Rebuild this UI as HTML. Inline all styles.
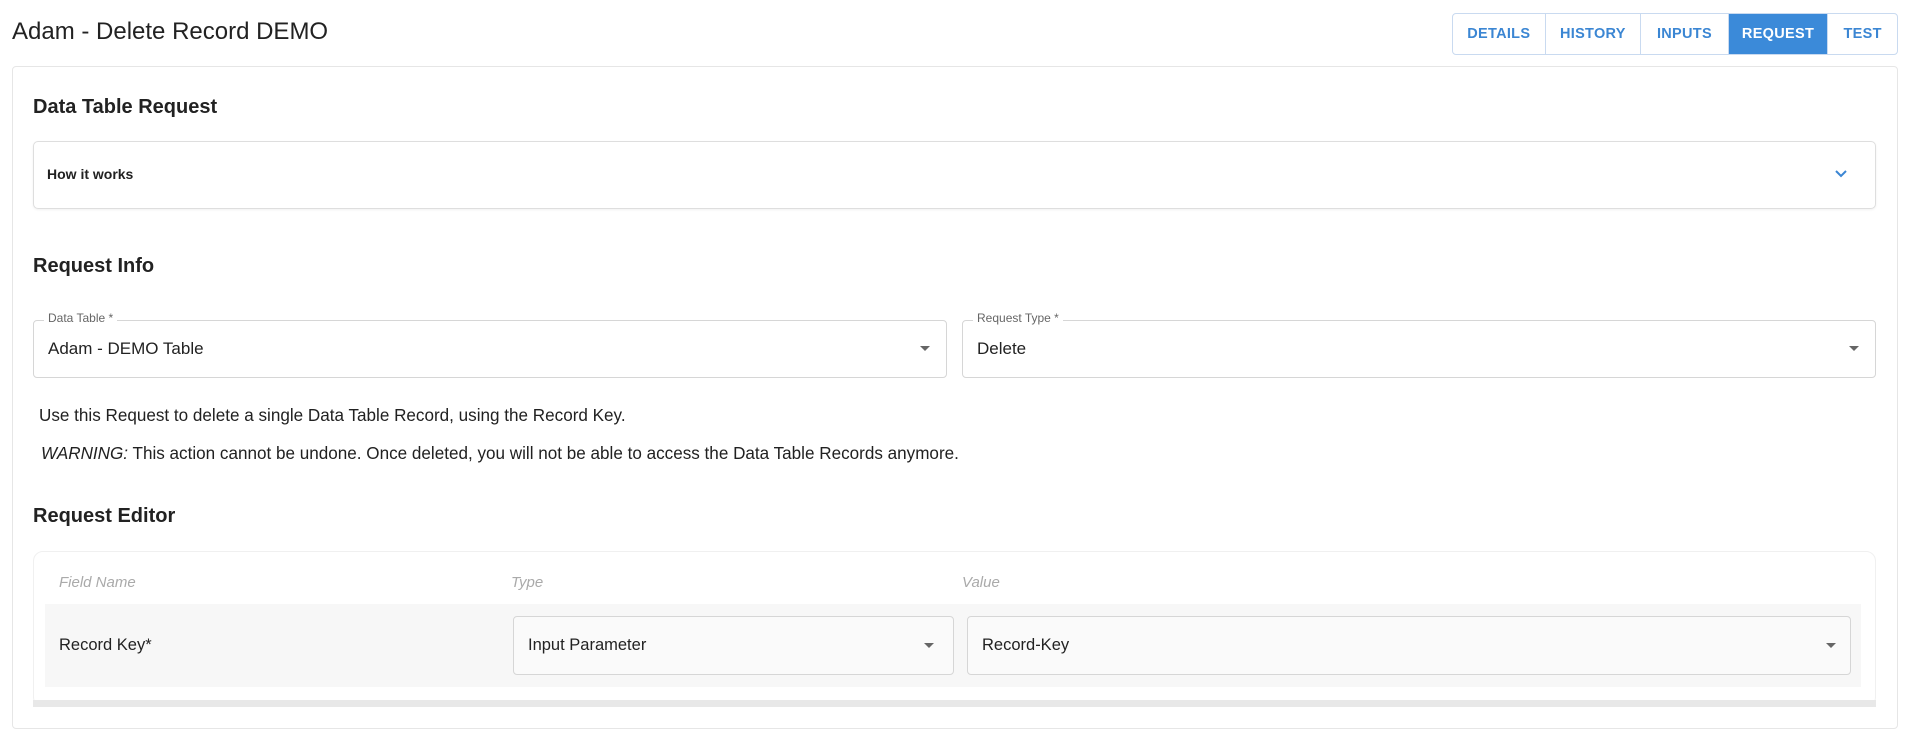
<!DOCTYPE html>
<html><head><meta charset="utf-8"><style>
*{box-sizing:border-box;margin:0;padding:0}
body{width:1920px;height:736px;background:#fff;font-family:"Liberation Sans",sans-serif;color:#212121;position:relative;overflow:hidden}
.a{position:absolute}
.title{left:12px;top:18px;font-size:24px;color:#222}
.tabs{left:1452px;top:13px;height:42px;width:446px;border:1px solid #c9daf0;border-radius:4px;display:flex;overflow:hidden}
.tab{height:100%;display:flex;align-items:center;justify-content:center;font-size:14.5px;font-weight:bold;color:#3b86d3;border-right:1px solid #c9daf0;letter-spacing:.3px}
.tab.on{background:#3b8ad9;color:#fff}
.card{left:12px;top:66px;width:1886px;height:663px;border:1px solid #e6e6e6;border-radius:4px}
.h{font-size:20px;font-weight:bold;color:#222}
.box{border:1px solid #dedede;border-radius:5px}
.sel{border:1px solid #d6d6d6;border-radius:4px}
.lab{font-size:12px;color:#666;background:#fff;padding:0 4px}
.val{font-size:17px;color:#222}
.arr{width:0;height:0;border-left:5px solid transparent;border-right:5px solid transparent;border-top:5px solid #666}
.th{font-size:15px;color:#aaa;font-style:italic}
</style></head><body>
<div class="a title">Adam - Delete Record DEMO</div>
<div class="a tabs">
<div class="tab" style="width:93px">DETAILS</div>
<div class="tab" style="width:96px">HISTORY</div>
<div class="tab" style="width:88px">INPUTS</div>
<div class="tab on" style="width:100px">REQUEST</div>
<div class="tab" style="width:69px;border-right:none">TEST</div>
</div>
<div class="a card"></div>
<div class="a h" style="left:33px;top:96px">Data Table Request</div>
<div class="a box" style="left:33px;top:141px;width:1843px;height:68px;box-shadow:0 1px 2px rgba(0,0,0,.06)"></div>
<div class="a" style="left:47px;top:166px;font-size:14px;font-weight:bold">How it works</div>
<svg class="a" style="left:1833px;top:168px" width="16" height="12" viewBox="0 0 16 12"><path d="M3 3l5 5 5-5" fill="none" stroke="#3b86d3" stroke-width="2"/></svg>
<div class="a h" style="left:33px;top:255px">Request Info</div>
<div class="a sel" style="left:33px;top:320px;width:914px;height:58px"></div>
<div class="a lab" style="left:44px;top:311px">Data Table *</div>
<div class="a val" style="left:48px;top:339px">Adam - DEMO Table</div>
<div class="a arr" style="left:920px;top:346px"></div>
<div class="a sel" style="left:962px;top:320px;width:914px;height:58px"></div>
<div class="a lab" style="left:973px;top:311px">Request Type *</div>
<div class="a val" style="left:977px;top:339px">Delete</div>
<div class="a arr" style="left:1849px;top:346px"></div>
<div class="a" style="left:39px;top:406px;font-size:17.1px">Use this Request to delete a single Data Table Record, using the Record Key.</div>
<div class="a" style="left:41px;top:444px;font-size:17.1px"><i>WARNING:</i> This action cannot be undone. Once deleted, you will not be able to access the Data Table Records anymore.</div>
<div class="a h" style="left:33px;top:505px">Request Editor</div>
<div class="a" style="left:33px;top:551px;width:1843px;height:156px;border:1px solid #f0f0f0;border-radius:10px"></div>
<div class="a th" style="left:59px;top:574px">Field Name</div>
<div class="a th" style="left:511px;top:574px">Type</div>
<div class="a th" style="left:962px;top:574px">Value</div>
<div class="a" style="left:45px;top:604px;width:1816px;height:83px;background:#f7f7f7"></div>
<div class="a val" style="left:59px;top:636px;font-size:16.5px">Record Key*</div>
<div class="a sel" style="left:513px;top:616px;width:441px;height:59px;background:#fafafa"></div>
<div class="a val" style="left:528px;top:636px;font-size:16.5px">Input Parameter</div>
<div class="a arr" style="left:924px;top:643px"></div>
<div class="a sel" style="left:967px;top:616px;width:884px;height:59px;background:#fafafa"></div>
<div class="a val" style="left:982px;top:636px;font-size:16.5px">Record-Key</div>
<div class="a arr" style="left:1826px;top:643px"></div>
<div class="a" style="left:33px;top:700px;width:1843px;height:7px;background:#e8e8e8"></div>
</body></html>
